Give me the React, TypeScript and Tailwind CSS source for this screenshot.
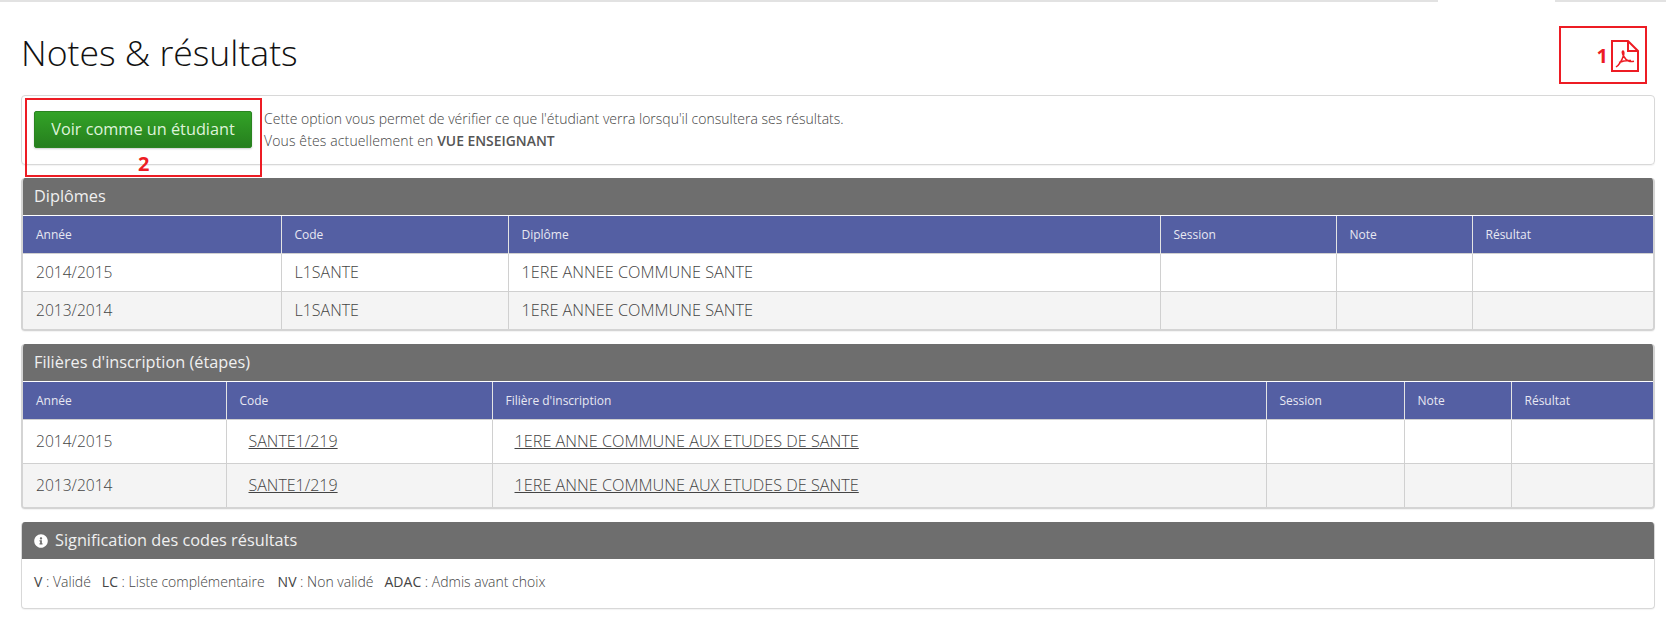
import { FaInfoCircle } from 'react-icons/fa';

function PdfIcon() {
  return (
    <svg width="28" height="32" viewBox="0 0 28 32" fill="none" stroke="#ed1c24" className="block">
      <path d="M1 1H17L27 11V31H1Z" strokeWidth="2" />
      <path d="M17 1V11H27" strokeWidth="2" />
      <path
        d="M5 27C8 25 11 20 12.5 15.5C13.2 13 12.8 11 12 11C11 11 11 13.5 12.5 16C14 18.6 16 20.5 17.5 21C19 21.5 22 21.4 23 21.2M8 22.5C12 20.8 16 20.4 20 20.6"
        strokeWidth="1.5"
      />
    </svg>
  );
}

const diplomes = [
  { annee: '2014/2015', code: 'L1SANTE', label: '1ERE ANNEE COMMUNE SANTE' },
  { annee: '2013/2014', code: 'L1SANTE', label: '1ERE ANNEE COMMUNE SANTE' },
];

const filieres = [
  { annee: '2014/2015', code: 'SANTE1/219', label: '1ERE ANNE COMMUNE AUX ETUDES DE SANTE' },
  { annee: '2013/2014', code: 'SANTE1/219', label: '1ERE ANNE COMMUNE AUX ETUDES DE SANTE' },
];

const th = 'h-[37px] border-l border-[#e4e4e4] first:border-l-0 px-[13px] pt-[2px] text-left text-[12px] font-normal text-[#e8e8f2]';
const td = 'border-l border-t border-[#d0d0d0] first:border-l-0 px-[13px] text-[16px] font-light text-[#444]';
const panel = 'overflow-hidden rounded border-b-2 border-x-2 border-[#d4d4d4] shadow-[0_1px_1px_rgba(0,0,0,0.05)]';

export default function App() {
  return (
    <div className="relative h-[644px] overflow-hidden bg-white font-['Open_Sans',sans-serif] text-[#555]">
      <div className="flex h-[2px]">
        <div className="flex-1 bg-[#e2e2e2]" />
        <div className="w-[117px]" />
        <div className="w-[111px] bg-[#e2e2e2]" />
      </div>

      <div className="px-[21px] pr-[11px]">
        <h1 className="mt-[26px] h-[67px] text-[35.6px] leading-[48px] font-light text-[#111]">Notes &amp; résultats</h1>

        <div className="flex h-[70px] rounded border border-[#d8d8d8] pt-[15px] pl-[12px] shadow-[0_1px_1px_rgba(0,0,0,0.05)]">
          <button className="h-[37px] w-[218px] rounded-[2px] border border-[#2a8420] bg-gradient-to-b from-[#33a327] to-[#267f1e] text-[16.3px] text-[#dff3da] shadow-[0_1px_2px_rgba(0,0,0,0.2)]">
            Voir comme un étudiant
          </button>
          <p className="ml-[12px] -mt-[3px] text-[14px] leading-[22px] font-light text-[#444]">
            Cette option vous permet de vérifier ce que l'étudiant verra lorsqu'il consultera ses résultats.
            <br />
            <span className="tracking-[0.13px]">Vous êtes actuellement en</span>{' '}
            <span className="text-[13.9px] font-semibold text-[#555]">VUE ENSEIGNANT</span>
          </p>
        </div>

        <section className={`mt-[13px] ${panel}`}>
          <h2 className="flex h-[37px] items-center bg-[#6e6e6e] px-[11px] text-[16.3px] font-normal text-[#f0f0f0]">Diplômes</h2>
          <table className="mt-[1px] w-full table-fixed border-collapse">
            <colgroup>
              <col className="w-[258px]" />
              <col className="w-[227px]" />
              <col className="w-[652px]" />
              <col className="w-[176px]" />
              <col className="w-[136px]" />
              <col />
            </colgroup>
            <thead className="bg-[#545fa3]">
              <tr>
                <th className={th}>Année</th>
                <th className={th}>Code</th>
                <th className={th}>Diplôme</th>
                <th className={th}>Session</th>
                <th className={th}>Note</th>
                <th className={th}>Résultat</th>
              </tr>
            </thead>
            <tbody>
              {diplomes.map((row, index) => (
                <tr key={index} className={index === 1 ? 'h-[38px] bg-[#f4f4f4]' : 'h-[38px] bg-white'}>
                  <td className={td}>
                    <span className="text-[15.6px]">{row.annee}</span>
                  </td>
                  <td className={td}>{row.code}</td>
                  <td className={td}>
                    <span className="text-[16.25px]">{row.label}</span>
                  </td>
                  <td className={td} />
                  <td className={td} />
                  <td className={td} />
                </tr>
              ))}
            </tbody>
          </table>
        </section>

        <section className={`mt-[13px] ${panel}`}>
          <h2 className="flex h-[37px] items-center bg-[#6e6e6e] px-[11px] text-[16.3px] font-normal text-[#f0f0f0]">
            Filières d'inscription (étapes)
          </h2>
          <table className="mt-[1px] w-full table-fixed border-collapse">
            <colgroup>
              <col className="w-[203px]" />
              <col className="w-[266px]" />
              <col className="w-[774px]" />
              <col className="w-[138px]" />
              <col className="w-[107px]" />
              <col />
            </colgroup>
            <thead className="bg-[#545fa3]">
              <tr>
                <th className={th}>Année</th>
                <th className={th}>Code</th>
                <th className={th}>Filière d'inscription</th>
                <th className={th}>Session</th>
                <th className={th}>Note</th>
                <th className={th}>Résultat</th>
              </tr>
            </thead>
            <tbody>
              {filieres.map((row, index) => (
                <tr key={index} className={index === 1 ? 'h-[44px] bg-[#f4f4f4]' : 'h-[44px] bg-white'}>
                  <td className={td}>
                    <span className="text-[15.6px]">{row.annee}</span>
                  </td>
                  <td className={td}>
                    <a className="ml-[9px] underline">{row.code}</a>
                  </td>
                  <td className={td}>
                    <a className="ml-[9px] text-[16.25px] underline">{row.label}</a>
                  </td>
                  <td className={td} />
                  <td className={td} />
                  <td className={td} />
                </tr>
              ))}
            </tbody>
          </table>
        </section>

        <section className="mt-[13px] overflow-hidden rounded border border-t-0 border-[#d8d8d8] shadow-[0_1px_1px_rgba(0,0,0,0.05)]">
          <h2 className="flex h-[37px] items-center gap-[7px] bg-[#6e6e6e] px-3 text-[16.3px] font-normal text-[#f0f0f0]">
            <FaInfoCircle className="text-[14px] text-white" />
            Signification des codes résultats
          </h2>
          <p className="flex h-[49px] items-center gap-[11px] px-3 pb-[4px] text-[14px] font-light text-[#444]">
            <span><b className="font-normal text-[#444]">V</b> : Validé</span>
            <span><b className="font-normal text-[#444]">LC</b> : Liste complémentaire</span>
            <span className="ml-[2px]"><b className="font-normal text-[#444]">NV</b> : Non validé</span>
            <span><b className="font-normal text-[#444]">ADAC</b> : Admis avant choix</span>
          </p>
        </section>
      </div>

      {/* annotations drawn over the screenshot */}
      <div className="absolute top-[26px] left-[1559px] flex h-[58px] w-[88px] items-center justify-end border-2 border-[#ed1c24] pr-[6px] pt-[2px]">
        <span className="mr-[3px] text-[20px] font-bold text-[#ed1c24]">1</span>
        <PdfIcon />
      </div>
      <div className="absolute top-[98px] left-[25px] h-[79px] w-[237px] border-2 border-[#ed1c24]">
        <span className="absolute top-[51px] left-[111px] text-[20px] leading-[26px] font-bold text-[#ed1c24]">2</span>
      </div>
    </div>
  );
}
